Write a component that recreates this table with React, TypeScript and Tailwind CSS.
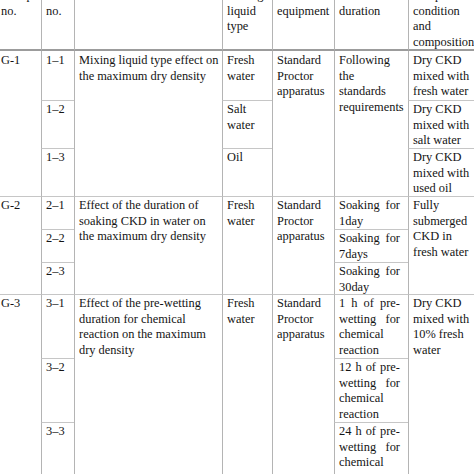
import React from "react";

const COL = ["", "col-start-1", "col-start-2", "col-start-3", "col-start-4", "col-start-5", "col-start-6", "col-start-7"];
const ROW = ["", "row-start-1", "row-start-2", "row-start-3", "row-start-4", "row-start-5", "row-start-6", "row-start-7", "row-start-8", "row-start-9", "row-start-10"];
const SPAN = ["", "row-span-1", "row-span-2", "row-span-3"];

type CellProps = {
  c: number;
  r: number;
  span?: number;
  lines: string[];
  justify?: boolean;
};

function Cell({ c, r, span = 1, lines, justify = false }: CellProps) {
  const header = r === 1;
  const firstData = r === 2;
  const cls = [
    COL[c],
    ROW[r],
    SPAN[span],
    c === 1 ? "pl-[1px]" : "pl-[4px] border-l border-l-[#b4b4b4]",
    c === 6 ? "pr-[8px]" : "pr-[3px]",
    header ? "pt-[1px] border-b-2 border-b-[#9c9c9c]" : firstData ? "pt-[2px]" : "pt-[1px] border-t border-t-[#c6c6c6]",
  ].join(" ");
  return (
    <div className={cls}>
      {lines.map((t, i) => (
        <div
          key={i}
          className={
            justify && i < lines.length - 1
              ? "whitespace-nowrap text-justify [text-align-last:justify]"
              : "whitespace-nowrap"
          }
        >
          {t}
        </div>
      ))}
    </div>
  );
}

export default function App() {
  const app = ["Standard", "Proctor", "apparatus"];
  return (
    <div className="w-[474px] h-[474px] overflow-hidden bg-white">
      <div
        className="grid -mt-[13px] w-[490px] grid-cols-[41px_33px_148px_50px_62px_74px_82px] grid-rows-[64px_49px_48px_48px_33px_33px_32px_64px_64px_64px] text-[12.4px] leading-[15.6px] text-[#141414]"
        style={{ fontFamily: '"Liberation Serif", "Times New Roman", serif' }}
      >
        {/* Header */}
        <Cell c={1} r={1} lines={["Group", "no."]} />
        <Cell c={2} r={1} lines={["Test", "no."]} />
        <Cell c={3} r={1} lines={[]} />
        <Cell c={4} r={1} lines={["Mixing", "liquid", "type"]} />
        <Cell c={5} r={1} lines={["Test", "equipment"]} />
        <Cell c={6} r={1} lines={["Test", "duration"]} />
        <Cell c={7} r={1} lines={["Sample", "condition", "and", "composition"]} />

        {/* G-1 */}
        <Cell c={1} r={2} span={3} lines={["G-1"]} />
        <Cell c={2} r={2} lines={["1–1"]} />
        <Cell c={2} r={3} lines={["1–2"]} />
        <Cell c={2} r={4} lines={["1–3"]} />
        <Cell c={3} r={2} span={3} lines={["Mixing liquid type effect on", "the maximum dry density"]} />
        <Cell c={4} r={2} lines={["Fresh", "water"]} />
        <Cell c={4} r={3} lines={["Salt", "water"]} />
        <Cell c={4} r={4} lines={["Oil"]} />
        <Cell c={5} r={2} span={3} lines={app} />
        <Cell c={6} r={2} span={3} justify lines={["Following", "the", "standards", "requirements"]} />
        <Cell c={7} r={2} lines={["Dry CKD", "mixed with", "fresh water"]} />
        <Cell c={7} r={3} lines={["Dry CKD", "mixed with", "salt water"]} />
        <Cell c={7} r={4} lines={["Dry CKD", "mixed with", "used oil"]} />

        {/* G-2 */}
        <Cell c={1} r={5} span={3} lines={["G-2"]} />
        <Cell c={2} r={5} lines={["2–1"]} />
        <Cell c={2} r={6} lines={["2–2"]} />
        <Cell c={2} r={7} lines={["2–3"]} />
        <Cell c={3} r={5} span={3} lines={["Effect of the duration of", "soaking CKD in water on", "the maximum dry density"]} />
        <Cell c={4} r={5} span={3} lines={["Fresh", "water"]} />
        <Cell c={5} r={5} span={3} lines={app} />
        <Cell c={6} r={5} justify lines={["Soaking for", "1day"]} />
        <Cell c={6} r={6} justify lines={["Soaking for", "7days"]} />
        <Cell c={6} r={7} justify lines={["Soaking for", "30day"]} />
        <Cell c={7} r={5} span={3} lines={["Fully", "submerged", "CKD in", "fresh water"]} />

        {/* G-3 */}
        <Cell c={1} r={8} span={3} lines={["G-3"]} />
        <Cell c={2} r={8} lines={["3–1"]} />
        <Cell c={2} r={9} lines={["3–2"]} />
        <Cell c={2} r={10} lines={["3–3"]} />
        <Cell c={3} r={8} span={3} lines={["Effect of the pre-wetting", "duration for chemical", "reaction on the maximum", "dry density"]} />
        <Cell c={4} r={8} span={3} lines={["Fresh", "water"]} />
        <Cell c={5} r={8} span={3} lines={app} />
        <Cell c={6} r={8} justify lines={["1 h of pre-", "wetting for", "chemical", "reaction"]} />
        <Cell c={6} r={9} justify lines={["12 h of pre-", "wetting for", "chemical", "reaction"]} />
        <Cell c={6} r={10} justify lines={["24 h of pre-", "wetting for", "chemical", "reaction"]} />
        <Cell c={7} r={8} span={3} lines={["Dry CKD", "mixed with", "10% fresh", "water"]} />
      </div>
    </div>
  );
}
